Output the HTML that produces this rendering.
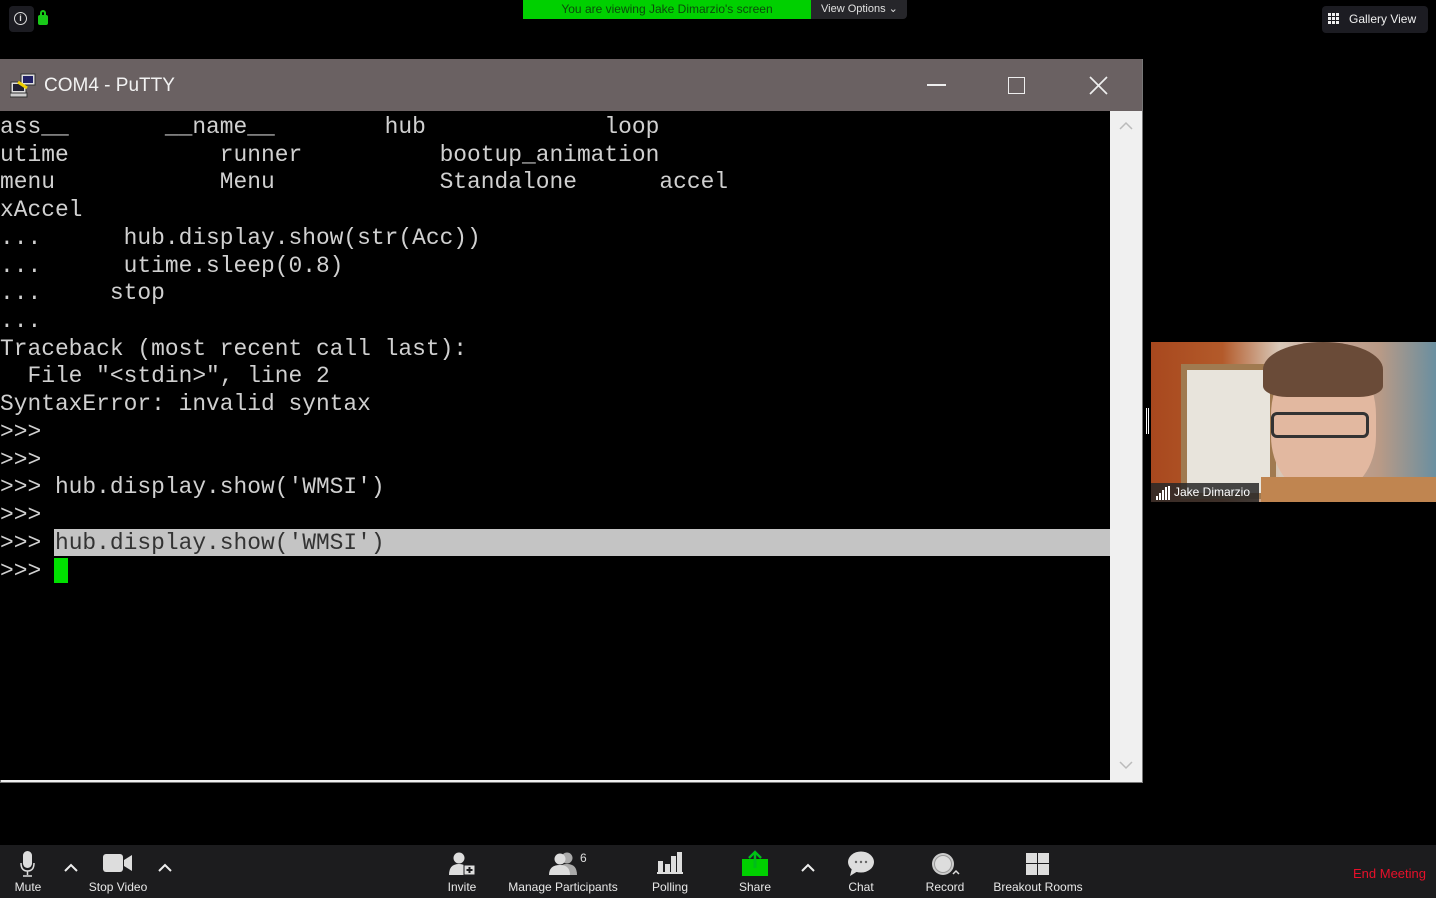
<!DOCTYPE html>
<html><head><meta charset="utf-8"><style>
*{margin:0;padding:0;box-sizing:border-box}
body{width:1436px;height:898px;background:#000;position:relative;overflow:hidden;font-family:"Liberation Sans",sans-serif}
.abs{position:absolute}
.term{position:absolute;left:0;top:111px;width:1110px;height:669px;background:#000;overflow:hidden}
.ln{position:absolute;left:0;font-family:"Liberation Mono",monospace;font-size:22.9px;color:#d0d0d0;white-space:pre;line-height:28px;letter-spacing:0}
.tb{position:absolute;top:845px;left:0;width:1436px;height:53px;background:#1c1c1e}
.lab{position:absolute;top:880px;color:#e8e8e8;font-size:12px;transform:translateX(-50%);white-space:nowrap}
</style></head><body>
<div class="abs" style="left:9px;top:6px;width:25px;height:26px;background:#1c1c22;border-radius:4px"></div>
<div class="abs" style="left:14px;top:12px;width:13px;height:13px;border:1.5px solid #ddd;border-radius:50%;color:#ddd;font-size:9px;text-align:center;line-height:10px;font-weight:bold">i</div>
<div class="abs" style="left:38px;top:15px;width:10px;height:10px;background:#19c919;border-radius:2px"></div>
<div class="abs" style="left:40px;top:10px;width:6px;height:7px;border:2px solid #19c919;border-bottom:none;border-radius:3px 3px 0 0"></div>
<div class="abs" style="left:523px;top:0;width:288px;height:19px;background:#00d000;color:#0b4b0b;font-size:12px;text-align:center;line-height:18px">You are viewing Jake Dimarzio's screen</div>
<div class="abs" style="left:811px;top:0;width:96px;height:19px;background:#26262a;color:#e0e0e0;font-size:11px;line-height:18px;padding-left:10px;border-radius:0 0 4px 0">View Options &#8964;</div>
<div class="abs" style="left:1322px;top:6px;width:106px;height:27px;background:#1c1c22;border-radius:4px;color:#f0f0f0;font-size:12px;line-height:27px;padding-left:27px">Gallery View</div>
<svg class="abs" style="left:1328px;top:13px" width="11" height="11"><g fill="#f0f0f0"><rect x="0" y="0" width="3" height="3"/><rect x="4" y="0" width="3" height="3"/><rect x="8" y="0" width="3" height="3"/><rect x="0" y="4" width="3" height="3"/><rect x="4" y="4" width="3" height="3"/><rect x="8" y="4" width="3" height="3"/><rect x="0" y="8" width="3" height="3"/><rect x="4" y="8" width="3" height="3"/><rect x="8" y="8" width="3" height="3"/></g></svg>
<div class="abs" style="left:0;top:59px;width:1143px;height:724px;background:#f0f0f0;border:1px solid #777"></div>
<div class="abs" style="left:0;top:59px;width:1142px;height:52px;background:#6a6162"></div>
<svg class="abs" style="left:10px;top:72px" width="28" height="28"><rect x="1" y="10" width="15" height="11" fill="#ddd" stroke="#333"/><rect x="3" y="12" width="11" height="7" fill="#223"/><rect x="11" y="2" width="14" height="11" fill="#ddd" stroke="#333"/><rect x="13" y="4" width="10" height="7" fill="#226"/><path d="M8 10 L17 16" stroke="#f0d000" stroke-width="3"/><rect x="0" y="21" width="17" height="4" fill="#ccc" stroke="#333"/></svg>
<div class="abs" style="left:44px;top:75px;color:#f2f2f2;font-size:19px">COM4 - PuTTY</div>
<div class="abs" style="left:927px;top:84px;width:19px;height:1.5px;background:#eee"></div>
<div class="abs" style="left:1008px;top:77px;width:17px;height:17px;border:1.5px solid #eee"></div>
<svg class="abs" style="left:1089px;top:76px" width="19" height="19"><path d="M1 1L18 18M18 1L1 18" stroke="#eee" stroke-width="1.7"/></svg>
<div class="term">
<div class="abs" style="left:54px;top:418px;width:1056px;height:27px;background:#c4c4c4"></div>
<div class="abs" style="left:54px;top:447px;width:14px;height:25px;background:#00e000"></div>
<div class="ln" style="top:2px">ass__       __name__        hub             loop</div>
<div class="ln" style="top:30px">utime           runner          bootup_animation</div>
<div class="ln" style="top:57px">menu            Menu            Standalone      accel</div>
<div class="ln" style="top:85px">xAccel</div>
<div class="ln" style="top:113px">...      hub.display.show(str(Acc))</div>
<div class="ln" style="top:141px">...      utime.sleep(0.8)</div>
<div class="ln" style="top:168px">...     stop</div>
<div class="ln" style="top:196px">...</div>
<div class="ln" style="top:224px">Traceback (most recent call last):</div>
<div class="ln" style="top:251px">  File "&lt;stdin&gt;", line 2</div>
<div class="ln" style="top:279px">SyntaxError: invalid syntax</div>
<div class="ln" style="top:307px">&gt;&gt;&gt;</div>
<div class="ln" style="top:335px">&gt;&gt;&gt;</div>
<div class="ln" style="top:362px">&gt;&gt;&gt; hub.display.show('WMSI')</div>
<div class="ln" style="top:390px">&gt;&gt;&gt;</div>
<div class="ln" style="top:418px">&gt;&gt;&gt; <span style="color:#333">hub.display.show('WMSI')</span></div>
<div class="ln" style="top:446px">&gt;&gt;&gt;</div>
</div>
<div class="abs" style="left:1111px;top:111px;width:30px;height:669px;background:#f0f0f0"></div>
<svg class="abs" style="left:1119px;top:121px" width="14" height="10"><path d="M1 8L7 2L13 8" stroke="#bbb" stroke-width="1.5" fill="none"/></svg>
<svg class="abs" style="left:1119px;top:760px" width="14" height="10"><path d="M1 2L7 8L13 2" stroke="#bbb" stroke-width="1.5" fill="none"/></svg>
<div class="abs" style="left:1151px;top:342px;width:285px;height:160px;background:linear-gradient(90deg,#a8481e 0%,#b35a2a 25%,#d8c8b8 45%,#c9a899 60%,#b99a86 80%,#6a8fa0 100%);overflow:hidden">
<div class="abs" style="left:30px;top:22px;width:95px;height:135px;background:#e8e4dc;border:6px solid #a07a50"></div>
<div class="abs" style="left:120px;top:10px;width:105px;height:140px;background:#e2b8a0;border-radius:45% 45% 40% 40%"></div>
<div class="abs" style="left:112px;top:0;width:120px;height:55px;background:#6a4b38;border-radius:50% 50% 20% 20%"></div>
<div class="abs" style="left:120px;top:70px;width:98px;height:26px;border:3px solid #333;border-radius:6px"></div>
<div class="abs" style="left:110px;top:135px;width:175px;height:30px;background:#c08550"></div>
<div class="abs" style="left:0;top:141px;width:108px;height:19px;background:rgba(40,40,40,.85);color:#fff;font-size:12px;line-height:19px;padding-left:23px">Jake Dimarzio</div>
<svg class="abs" style="left:5px;top:144px" width="15" height="14"><g fill="#fff"><rect x="0" y="10" width="2" height="4"/><rect x="3" y="7" width="2" height="7"/><rect x="6" y="4" width="2" height="10"/><rect x="9" y="1" width="2" height="13"/><rect x="12" y="0" width="2" height="14"/></g></svg>
</div>
<div class="abs" style="left:1146px;top:408px;width:3px;height:26px;border-left:1px solid #fff;border-right:1px solid #fff"></div>
<div class="tb"></div>
<svg class="abs" style="left:19px;top:851px" width="18" height="26"><rect x="4" y="0" width="9" height="17" rx="4.5" fill="#ddd"/><path d="M2 12 Q2 20 8.5 20 Q15 20 15 12M8.5 20V24M4 25H13" stroke="#ddd" fill="none" stroke-width="1.5"/></svg>
<div class="lab" style="left:28px">Mute</div>
<svg class="abs" style="left:64px;top:863px" width="14" height="9"><path d="M1 8L7 2L13 8" stroke="#eee" stroke-width="2" fill="none"/></svg>
<svg class="abs" style="left:103px;top:854px" width="30" height="18"><rect x="0" y="0" width="20" height="18" rx="3" fill="#ddd"/><path d="M21 6L29 1V17L21 12Z" fill="#ddd"/></svg>
<div class="lab" style="left:118px">Stop Video</div>
<svg class="abs" style="left:158px;top:863px" width="14" height="9"><path d="M1 8L7 2L13 8" stroke="#eee" stroke-width="2" fill="none"/></svg>
<svg class="abs" style="left:449px;top:852px" width="28" height="24"><circle cx="10" cy="6" r="5.5" fill="#ddd"/><path d="M0 23Q0 12 10 12Q18 12 19 20V23Z" fill="#ddd"/><rect x="15" y="13" width="11" height="10" fill="#ddd" stroke="#1c1c1e"/><path d="M20.5 15V21M17.5 18H23.5" stroke="#1c1c1e" stroke-width="2"/></svg>
<div class="lab" style="left:462px">Invite</div>
<svg class="abs" style="left:549px;top:852px" width="30" height="24"><circle cx="18" cy="6" r="5.5" fill="#aaa"/><path d="M8 23Q8 12 18 12Q28 12 28 23Z" fill="#aaa"/><circle cx="11" cy="7" r="5.5" fill="#ddd"/><path d="M0 23Q0 13 11 13Q21 13 21 23Z" fill="#ddd"/></svg>
<div class="abs" style="left:580px;top:851px;color:#ddd;font-size:12px">6</div>
<div class="lab" style="left:563px">Manage Participants</div>
<svg class="abs" style="left:657px;top:852px" width="26" height="22"><g fill="#ddd"><rect x="1" y="9" width="5" height="11"/><rect x="8" y="12" width="5" height="8"/><rect x="14" y="4" width="5" height="16"/><rect x="20" y="0" width="5" height="20"/><rect x="0" y="20" width="26" height="2"/></g></svg>
<div class="lab" style="left:670px">Polling</div>
<svg class="abs" style="left:742px;top:850px" width="26" height="26"><rect x="0" y="9" width="26" height="17" fill="#00d000"/><path d="M13 18V3M7 8L13 2L19 8" stroke="#0a3" stroke-width="2.5" fill="none"/><path d="M13 18V3M7 8L13 2L19 8" stroke="#00d000" stroke-width="1" fill="none"/></svg>
<div class="lab" style="left:755px">Share</div>
<svg class="abs" style="left:801px;top:863px" width="14" height="9"><path d="M1 8L7 2L13 8" stroke="#eee" stroke-width="2" fill="none"/></svg>
<svg class="abs" style="left:847px;top:851px" width="28" height="26"><ellipse cx="14" cy="11" rx="13" ry="10.5" fill="#ddd"/><path d="M5 17L3 25L11 20Z" fill="#ddd"/><g fill="#666"><circle cx="9" cy="11" r="1.2"/><circle cx="14" cy="11" r="1.2"/><circle cx="19" cy="11" r="1.2"/></g></svg>
<div class="lab" style="left:861px">Chat</div>
<svg class="abs" style="left:931px;top:852px" width="30" height="26"><circle cx="12" cy="12" r="11" fill="#ccc"/><circle cx="12" cy="12" r="8.5" fill="#ddd" stroke="#999"/><path d="M22 22L25 19L28 22" stroke="#ddd" stroke-width="1.5" fill="none"/></svg>
<div class="lab" style="left:945px">Record</div>
<svg class="abs" style="left:1026px;top:853px" width="23" height="22"><g fill="#ddd"><rect x="0" y="0" width="11" height="10"/><rect x="12" y="0" width="11" height="10"/><rect x="0" y="11" width="11" height="11"/><rect x="12" y="11" width="11" height="11"/></g></svg>
<div class="lab" style="left:1038px">Breakout Rooms</div>
<div class="abs" style="left:1353px;top:866px;color:#e8102a;font-size:13px">End Meeting</div>
</body></html>
